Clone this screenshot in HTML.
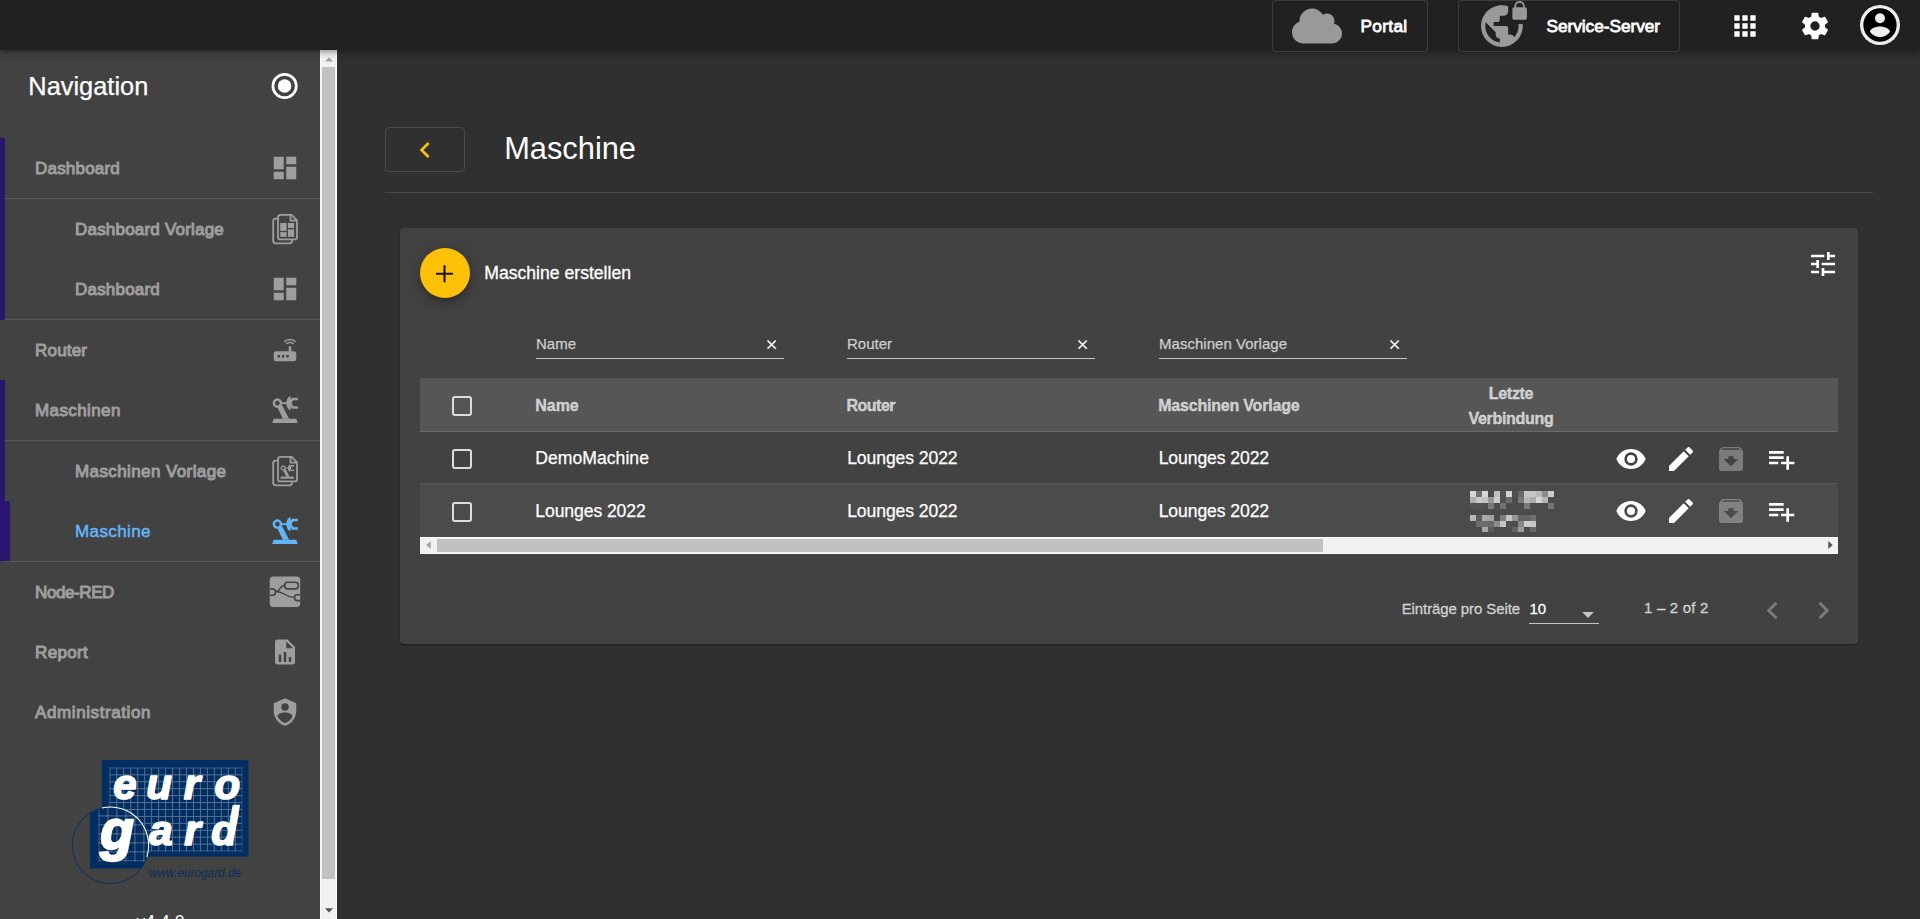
<!DOCTYPE html>
<html lang="de">
<head>
<meta charset="utf-8">
<title>Maschine</title>
<style>
*{box-sizing:border-box;margin:0;padding:0}
html,body{width:1920px;height:919px;overflow:hidden;background:#303030;font-family:"Liberation Sans",sans-serif;color:#fff}
.abs{position:absolute}
.t{position:absolute;white-space:nowrap;line-height:1}
.m{-webkit-text-stroke:1px currentColor}
.l{-webkit-text-stroke:.3px currentColor}
#topbar{position:absolute;left:0;top:0;width:1920px;height:50px;background:#212121;box-shadow:0 2px 4px -1px rgba(0,0,0,.2),0 4px 5px 0 rgba(0,0,0,.14),0 1px 10px 0 rgba(0,0,0,.12);z-index:10}
#side{position:absolute;left:0;top:50px;width:320px;height:869px;background:#424242;overflow:hidden;z-index:5}
#sbar{position:absolute;left:320px;top:50px;width:17px;height:869px;background:#f1f1f1;border-left:1px solid #fafafa;border-right:1px solid #fafafa;z-index:6}
#sbar .thumb{position:absolute;left:1px;top:17px;width:13px;height:812px;background:#c1c1c1}
.tbtn{position:absolute;top:0;height:52px;background:#212121;border:1px solid rgba(255,255,255,.12);border-radius:4px}
.nav{position:absolute;left:0;width:320px;height:60px}
.nav .t{top:21.7px;font-size:17px;color:#9e9e9e;letter-spacing:.2px}
.nav svg{position:absolute;left:270px;top:15px;width:30px;height:30px;fill:#9e9e9e}
.sep{position:absolute;left:5px;width:315px;height:1px;background:rgba(255,255,255,.12)}
.strip{position:absolute;left:0;background:#2a1570}
#card{position:absolute;left:400px;top:228px;width:1458px;height:416px;background:#424242;border-radius:4px;box-shadow:0 2px 1px -1px rgba(0,0,0,.2),0 1px 1px 0 rgba(0,0,0,.14),0 1px 3px 0 rgba(0,0,0,.12)}
.flt{position:absolute;top:334px;height:25px;width:248px;border-bottom:1px solid rgba(255,255,255,.7)}
.flt .t{left:0;top:1.9px;font-size:15px;color:rgba(255,255,255,.7);-webkit-text-stroke:.25px currentColor}
.flt svg{position:absolute;left:228.300px;top:2.700px;width:15.300px;height:15.300px;fill:#fff;stroke:#fff;stroke-width:.7}
.th{font-size:16px;font-weight:bold;color:rgba(255,255,255,.7);-webkit-text-stroke:.35px currentColor}
.td{font-size:17.6px;color:#fff;letter-spacing:-.1px;-webkit-text-stroke:.25px #fff}
.cb{position:absolute;left:452px;width:20px;height:20px;border:2.2px solid #dcdcdc;border-radius:3px}
.ic{position:absolute;width:32px;height:32px;fill:#fff}
.dis{fill:rgba(255,255,255,.3)}
</style>
</head>
<body>

<!-- TOP BAR -->
<div id="topbar">
  <div class="tbtn" style="left:1272px;width:156px">
    <svg class="abs" style="left:19px;top:4.5px;width:50px;height:40px" viewBox="0 0 640 512"><path fill="#999" d="M537.6 226.6c4.1-10.7 6.4-22.4 6.4-34.600 0-53-43-96-96-96-19.700 0-38.100 6-53.300 16.200C367 64.200 315.300 32 256 32c-88.400 0-160 71.600-160 160 0 2.700.1 5.400.2 8.100C40.200 219.800 0 273.200 0 336c0 79.500 64.500 144 144 144h368c70.700 0 128-57.300 128-128 0-61.900-44-113.600-102.400-125.400z"/></svg>
    <span class="t" style="left:87.5px;top:16.5px;font-size:17.3px;letter-spacing:.3px;-webkit-text-stroke:.8px #fff">Portal</span>
  </div>
  <div class="tbtn" style="left:1458px;width:222px">
    <svg class="abs" style="left:19.5px;top:-2px;width:50px;height:50px" viewBox="0 0 24 24"><path fill="#999" d="M22,4V3.500C22,2.120 20.880,1 19.500,1C18.120,1 17,2.120 17,3.500V4C16.450,4 16,4.450 16,5V9C16,9.550 16.450,10 17,10H22C22.550,10 23,9.550 23,9V5C23,4.450 22.550,4 22,4M21.200,4H17.800V3.500C17.800,2.560 18.560,1.800 19.500,1.800C20.440,1.800 21.200,2.560 21.200,3.500V4M18.920,12C18.960,12.330 19,12.660 19,13C19,15.080 18.200,16.970 16.900,18.390C16.640,17.580 15.900,17 15,17H14V14C14,13.450 13.550,13 13,13H7V11H9C9.550,11 10,10.550 10,10V8H12C13.100,8 14,7.100 14,6V3.460C13.050,3.160 12.050,3 11,3C5.480,3 1,7.480 1,13C1,18.520 5.480,23 11,23C16.520,23 21,18.520 21,13C21,12.660 20.980,12.330 20.950,12H18.920M10,20.930C6.050,20.440 3,17.080 3,13C3,12.380 3.080,11.790 3.210,11.210L8,16V17C8,18.100 8.900,19 10,19V20.930Z"/></svg>
    <span class="t" style="left:87.5px;top:16.5px;font-size:17.3px;letter-spacing:-.05px;-webkit-text-stroke:.8px #fff">Service-Server</span>
  </div>
  <svg class="abs" style="left:1729px;top:10px;width:32px;height:32px" viewBox="0 0 24 24"><path fill="#fff" d="M16,20H20V16H16M16,14H20V10H16M10,8H14V4H10M16,8H20V4H16M10,14H14V10H10M4,14H8V10H4M4,20H8V16H4M10,20H14V16H10M4,8H8V4H4V8Z"/></svg>
  <svg class="abs" style="left:1799px;top:10px;width:32px;height:32px" viewBox="0 0 24 24"><path fill="#fff" d="M12,15.500A3.500,3.500 0 0,1 8.500,12A3.500,3.500 0 0,1 12,8.500A3.500,3.500 0 0,1 15.500,12A3.500,3.500 0 0,1 12,15.500M19.430,12.970C19.470,12.650 19.500,12.330 19.500,12C19.500,11.670 19.470,11.340 19.430,11L21.540,9.370C21.730,9.220 21.780,8.950 21.660,8.730L19.660,5.270C19.540,5.050 19.270,4.960 19.050,5.050L16.560,6.050C16.040,5.660 15.500,5.320 14.870,5.070L14.500,2.420C14.460,2.180 14.250,2 14,2H10C9.750,2 9.540,2.180 9.500,2.420L9.130,5.070C8.500,5.320 7.960,5.660 7.440,6.050L4.950,5.050C4.730,4.960 4.460,5.050 4.340,5.270L2.340,8.730C2.210,8.950 2.270,9.220 2.460,9.370L4.570,11C4.530,11.340 4.500,11.670 4.500,12C4.500,12.330 4.530,12.650 4.570,12.970L2.460,14.630C2.270,14.780 2.210,15.050 2.340,15.270L4.340,18.730C4.460,18.950 4.730,19.030 4.950,18.950L7.440,17.940C7.960,18.340 8.500,18.680 9.130,18.930L9.500,21.580C9.540,21.820 9.750,22 10,22H14C14.250,22 14.460,21.820 14.500,21.580L14.870,18.930C15.500,18.670 16.040,18.340 16.560,17.940L19.050,18.950C19.270,19.030 19.540,18.950 19.660,18.730L21.660,15.270C21.780,15.050 21.730,14.780 21.540,14.630L19.430,12.970Z"/></svg>
  <div class="abs" style="left:1860px;top:5px;width:40px;height:40px;border-radius:50%;background:#eee"></div>
  <svg class="abs" style="left:1860px;top:5px;width:40px;height:40px" viewBox="0 0 24 24"><path fill="#000" d="M12,19.200C9.500,19.200 7.290,17.920 6,16C6.030,14 10,12.900 12,12.900C14,12.900 17.970,14 18,16C16.710,17.920 14.500,19.200 12,19.200M12,5A3,3 0 0,1 15,8A3,3 0 0,1 12,11A3,3 0 0,1 9,8A3,3 0 0,1 12,5M12,2A10,10 0 0,0 2,12A10,10 0 0,0 12,22A10,10 0 0,0 22,12C22,6.470 17.500,2 12,2Z"/></svg>
</div>

<!-- SIDEBAR -->
<svg width="0" height="0" style="position:absolute">
  <defs>
    <symbol id="i-dash" viewBox="0 0 24 24"><path d="M13,3V9H21V3M13,21H21V11H13M3,21H11V15H3M3,13H11V3H3V13Z"/></symbol>
    <symbol id="i-robot" viewBox="0 0 40 48">
      <path fill-rule="evenodd" d="M12.400,8.300a4.750,4.750 0 1 0 0.001,0ZM12.400,10.700a2.350,2.350 0 1 1 -0.001,0Z"/>
      <path d="M12.300,17.300L17.900,28.700H24.100L17.000,14.900Z"/>
      <path d="M8.600,28.700H31.300L32.700,32.900H7.200Z"/>
      <rect x="16.500" y="12.200" width="5.500" height="1.800"/>
      <path d="M25.300,5.900C20,7.500 20,18.600 25.300,20.200C26.300,16 26.300,10 25.300,5.900Z"/>
      <path d="M25,13.050L27.700,8.900H32.900M25,13.050L27.700,17.400H32.900" fill="none" stroke="currentColor" stroke-width="2.500"/>
    </symbol>
    <symbol id="i-files" viewBox="0 0 40 48">
      <path fill="none" stroke="currentColor" stroke-width="1.800" d="M15.500,9.900H26.600L32,15.300V31.900a2.500,2.500 0 0 1 -2.500,2.500H15.500a2.500,2.500 0 0 1 -2.500,-2.500V12.400a2.500,2.500 0 0 1 2.500,-2.500ZM25.500,10.200V15.700H31.700M13,13.700H10.700a2.500,2.500 0 0 0 -2.500,2.500V35.800a2.500,2.500 0 0 0 2.500,2.500H24.500a2.500,2.500 0 0 0 2.500,-2.500V34.600"/>
    </symbol>
  </defs>
</svg>
<div id="side">
  <div class="t" style="left:28.300px;top:23.500px;font-size:25.400px;color:#fff;-webkit-text-stroke:.25px #fff">Navigation</div>
  <svg class="abs" style="left:264px;top:15px;width:42px;height:42px" viewBox="0 0 42 42"><circle cx="20.600" cy="21" r="11.700" fill="none" stroke="#fff" stroke-width="2.700"/><circle cx="20.600" cy="21" r="6.800" fill="#fff"/></svg>

  <div class="strip" style="top:88px;width:5px;height:182px"></div>
  <div class="strip" style="top:330px;width:5px;height:181px"></div>
  <div class="strip" style="top:451px;width:10px;height:60px"></div>

  <div class="nav" style="top:88px"><span class="t m" style="left:35px">Dashboard</span><svg><use href="#i-dash"/></svg></div>
  <div class="sep" style="top:148px"></div>
  <div class="nav" style="top:149px"><span class="t m" style="left:75px">Dashboard Vorlage</span>
    <svg style="left:265px;top:6px;width:40px;height:48px;color:#9e9e9e" viewBox="0 0 40 48"><use href="#i-files"/><rect x="15.250" y="18" width="6.400" height="7.850"/><rect x="23" y="18" width="6.150" height="5"/><rect x="15.250" y="27.150" width="6.400" height="4.700"/><rect x="23" y="24.300" width="6.150" height="7.550"/></svg></div>
  <div class="nav" style="top:209px"><span class="t m" style="left:75px">Dashboard</span><svg><use href="#i-dash"/></svg></div>
  <div class="sep" style="top:269px"></div>
  <div class="nav" style="top:270px"><span class="t m" style="left:35px">Router</span>
    <svg viewBox="0 0 24 24"><path d="M20.200,5.900L21,5.100C19.600,3.700 17.800,3 16,3C14.200,3 12.400,3.700 11,5.100L11.800,5.900C13,4.800 14.500,4.200 16,4.200C17.500,4.200 19,4.800 20.200,5.900M19.300,6.700C18.400,5.800 17.200,5.300 16,5.300C14.800,5.300 13.600,5.800 12.700,6.700L13.500,7.500C14.200,6.800 15.100,6.500 16,6.500C16.900,6.500 17.800,6.800 18.500,7.500L19.300,6.700M19,13H17V9H15V13H5A2,2 0 0,0 3,15V19A2,2 0 0,0 5,21H19A2,2 0 0,0 21,19V15A2,2 0 0,0 19,13M8,18H6V16H8V18M11.500,18H9.500V16H11.500V18M15,18H13V16H15V18Z"/></svg></div>
  <div class="nav" style="top:330px"><span class="t m" style="left:35px;letter-spacing:0.40px">Maschinen</span>
    <svg style="left:265px;top:10px;width:40px;height:48px;color:#9e9e9e"><use href="#i-robot"/></svg></div>
  <div class="sep" style="top:390px"></div>
  <div class="nav" style="top:391px"><span class="t m" style="left:75px;letter-spacing:0.40px">Maschinen Vorlage</span>
    <svg style="left:265px;top:6px;width:40px;height:48px;color:#9e9e9e" viewBox="0 0 40 48"><use href="#i-files"/><g transform="translate(11.460 13.960) scale(.54)"><use href="#i-robot" width="40" height="48"/></g></svg></div>
  <div class="nav" style="top:451px"><span class="t" style="left:75px;color:#64b5f6;letter-spacing:0.4px;-webkit-text-stroke:.5px #64b5f6">Maschine</span>
    <svg style="left:265px;top:10px;width:40px;height:48px;color:#64b5f6;fill:#64b5f6"><use href="#i-robot"/></svg></div>
  <div class="sep" style="top:511px"></div>
  <div class="nav" style="top:512px"><span class="t m" style="left:35px;letter-spacing:-0.40px">Node-RED</span>
    <svg style="left:265px;top:6px;width:40px;height:48px" viewBox="0 0 40 48"><rect x="4.700" y="8.600" width="30.500" height="30.500" rx="3.600"/><g fill="none" stroke="#424242" stroke-width="1.600"><rect x="19.700" y="14.200" width="13.600" height="6.700" rx="2.800"/><path d="M4.700,21H7.800a2.600,2.600 0 0 1 2.600,2.600v1a2.600,2.600 0 0 1 -2.600,2.600H4.700"/><path d="M35.200,26.700H32.200a2.600,2.600 0 0 0 -2.600,2.600v0.700a2.600,2.600 0 0 0 2.600,2.600H35.200"/><path d="M10.700,23.500C16,23.500 14,17.500 19.700,17.500M10.700,23.500C20,23.500 20,29.600 29.600,29.600" stroke-width="1.300"/></g></svg></div>
  <div class="nav" style="top:572px"><span class="t m" style="left:35px;letter-spacing:0.35px">Report</span>
    <svg viewBox="0 0 24 24"><path d="M13,9H18.500L13,3.500V9M6,2H14L20,8V20A2,2 0 0,1 18,22H6C4.890,22 4,21.100 4,20V4C4,2.890 4.890,2 6,2M7,20H9V14H7V20M11,20H13V12H11V20M15,20H17V16H15V20Z"/></svg></div>
  <div class="nav" style="top:632px"><span class="t m" style="left:35px;letter-spacing:0.60px">Administration</span>
    <svg viewBox="0 0 24 24"><path d="M12,1L3,5V11C3,16.550 6.840,21.740 12,23C17.160,21.740 21,16.550 21,11V5L12,1M12,5A3,3 0 0,1 15,8A3,3 0 0,1 12,11A3,3 0 0,1 9,8A3,3 0 0,1 12,5M17.130,17C15.920,18.850 14.110,20.240 12,20.920C9.890,20.240 8.080,18.850 6.870,17C6.530,16.500 6.240,16 6,15.470C6,13.820 8.710,12.470 12,12.470C15.290,12.470 18,13.790 18,15.470C17.760,16 17.470,16.500 17.130,17Z"/></svg></div>

  <!-- LOGO (coordinates are page px; svg placed at page origin of sidebar: top=50) -->
  <svg class="abs" style="left:60px;top:700px;width:200px;height:169px" viewBox="60 750 200 169">
    <defs>
      <clipPath id="lens"><circle cx="110.500" cy="845.300" r="38.300"/></clipPath>
      <pattern id="grid" x="109.300" y="767.400" width="6.970" height="6.930" patternUnits="userSpaceOnUse"><path d="M0,.5H7M.5,0V7" stroke="rgba(205,205,205,.42)" stroke-width="1" fill="none"/></pattern>
      <pattern id="gridL" x="98.400" y="815.400" width="9" height="9" patternUnits="userSpaceOnUse"><path d="M0,.5H9M.5,0V9" stroke="rgba(205,205,205,.4)" stroke-width="1" fill="none"/></pattern>
    </defs>
    <rect x="101.900" y="760.100" width="146.500" height="96.500" fill="#002d62"/>
    <rect x="109.300" y="767.400" width="133" height="84.100" fill="url(#grid)"/>
    <g clip-path="url(#lens)">
      <rect x="90" y="800" width="62" height="68.400" fill="#002d62"/>
      <rect x="98.400" y="800" width="54" height="61.400" fill="url(#gridL)"/>
    </g>
    <circle cx="110.500" cy="845.300" r="38.300" fill="none" stroke="#0a2d62" stroke-width="1"/>
    <path d="M101.900,808 A38.300,38.300 0 0 1 146.800,857" fill="none" stroke="#fff" stroke-width="1.100"/>
    <g font-family="Liberation Sans, sans-serif" font-weight="bold" font-style="italic" fill="#fff" stroke="#fff" stroke-width="1.700" stroke-linejoin="round">
      <text x="113.300 146.150 183.800 214.500" y="799.400" font-size="42">euro</text>
      <text><tspan x="100.300" y="848.800" font-size="55" stroke-width="2.400">g</tspan><tspan x="149.200 184.150 211.300" y="844.700" font-size="42">ard</tspan></text>
      <path d="M231.300,817L237,817L239.100,805.600L233.400,805.600Z" stroke-width="1.700"/>
    </g>
    <text x="149" y="876.700" font-family="Liberation Sans, sans-serif" font-style="italic" font-size="11.850" letter-spacing="0" fill="#0d2c5c">www.eurogard.de</text>
  </svg>
  <div class="t" style="left:136.500px;top:863.400px;font-size:17.600px;color:#fff;transform:translateY(.6px)">v4.4.0</div>
</div>
<div id="sbar"><div class="thumb"></div>
  <svg class="abs" style="left:4px;top:6.500px;width:8px;height:5px" viewBox="0 0 8 5"><path d="M0,4.500L4,.3L8,4.500Z" fill="#a3a3a3"/></svg>
  <svg class="abs" style="left:4px;top:857.500px;width:8px;height:5px" viewBox="0 0 8 5"><path d="M0,.3L4,4.500L8,.3Z" fill="#505050"/></svg>
</div>

<!-- PAGE HEADER -->
<div class="abs" style="left:385px;top:127px;width:80px;height:45px;border:1px solid rgba(255,255,255,.12);border-radius:4px"></div>
<svg class="abs" style="left:409px;top:134px;width:32px;height:32px" viewBox="0 0 24 24"><path fill="#ffc107" d="M15.410,16.580L10.830,12L15.410,7.410L14,6L8,12L14,18L15.410,16.580Z"/></svg>
<div class="t" style="left:504.200px;top:133.600px;font-size:30.800px;color:#fff">Maschine</div>
<div class="abs" style="left:385px;top:192px;width:1488px;height:1px;background:rgba(255,255,255,.12)"></div>

<!-- CARD -->
<div id="card"></div>
<div class="abs" style="left:420px;top:248px;width:50px;height:50px;border-radius:50%;background:#ffc107;box-shadow:0 3px 5px -1px rgba(0,0,0,.2),0 6px 10px 0 rgba(0,0,0,.14),0 1px 18px 0 rgba(0,0,0,.12)"></div>
<svg class="abs" style="left:435px;top:264px;width:20px;height:20px" viewBox="0 0 20 20"><path d="M1,9.750H18M9.500,1.200V18.300" stroke="#1c1500" stroke-width="2.100" fill="none"/></svg>
<div class="t l" style="left:484.300px;top:265.100px;font-size:17.600px;color:#fff">Maschine erstellen</div>
<svg class="ic" style="left:1807px;top:247.750px" viewBox="0 0 24 24"><path d="M3,17V19H9V17H3M3,5V7H13V5H3M13,21V19H21V17H13V15H11V21H13M7,9V11H3V13H7V15H9V9H7M21,13V11H11V13H21M15,9H17V7H21V5H17V3H15V9Z"/></svg>

<!-- FILTERS -->
<svg width="0" height="0" style="position:absolute"><defs><symbol id="i-x" viewBox="0 0 24 24"><path d="M19,6.410L17.590,5L12,10.590L6.410,5L5,6.410L10.590,12L5,17.590L6.410,19L12,13.410L17.590,19L19,17.590L13.410,12L19,6.410Z"/></symbol></defs></svg>
<div class="flt" style="left:536px"><span class="t">Name</span><svg><use href="#i-x"/></svg></div>
<div class="flt" style="left:847px"><span class="t">Router</span><svg><use href="#i-x"/></svg></div>
<div class="flt" style="left:1159px"><span class="t" style="letter-spacing:.03px">Maschinen Vorlage</span><svg><use href="#i-x"/></svg></div>

<!-- TABLE -->
<div class="abs" style="left:420px;top:378px;width:1418px;height:54px;background:#565656;border-bottom:1px solid #6a6a6a"></div>
<div class="abs" style="left:420px;top:432px;width:1418px;height:52px;background:#424242;border-bottom:1px solid #585858"></div>
<div class="abs" style="left:420px;top:484px;width:1418px;height:53px;background:#4b4b4b"></div>
<div class="cb" style="top:396px"></div>
<div class="cb" style="top:449px"></div>
<div class="cb" style="top:502px"></div>
<div class="t th" style="left:535.200px;top:398.400px">Name</div>
<div class="t th" style="left:846.500px;top:398.400px;letter-spacing:-.5px">Router</div>
<div class="t th" style="left:1158.200px;top:398.400px;letter-spacing:-.2px">Maschinen Vorlage</div>
<div class="t th" style="left:1461px;top:385.700px;width:100px;text-align:center;letter-spacing:-.3px">Letzte</div>
<div class="t th" style="left:1461px;top:410.700px;width:100px;text-align:center;letter-spacing:-.3px">Verbindung</div>
<div class="t td" style="left:535.300px;top:450.200px;letter-spacing:.02px">DemoMachine</div>
<div class="t td" style="left:847.200px;top:450.200px">Lounges 2022</div>
<div class="t td" style="left:1158.700px;top:450.200px">Lounges 2022</div>
<div class="t td" style="left:535.300px;top:502.900px">Lounges 2022</div>
<div class="t td" style="left:847.200px;top:502.900px">Lounges 2022</div>
<div class="t td" style="left:1158.700px;top:502.900px">Lounges 2022</div>

<!-- ROW ACTIONS -->
<svg width="0" height="0" style="position:absolute"><defs>
<symbol id="i-eye" viewBox="0 0 24 24"><path d="M12,9A3,3 0 0,0 9,12A3,3 0 0,0 12,15A3,3 0 0,0 15,12A3,3 0 0,0 12,9M12,17A5,5 0 0,1 7,12A5,5 0 0,1 12,7A5,5 0 0,1 17,12A5,5 0 0,1 12,17M12,4.500C7,4.500 2.730,7.610 1,12C2.730,16.390 7,19.500 12,19.500C17,19.500 21.270,16.390 23,12C21.270,7.610 17,4.500 12,4.500Z"/></symbol>
<symbol id="i-pen" viewBox="0 0 24 24"><path d="M20.710,7.040C21.100,6.650 21.100,6 20.710,5.630L18.370,3.290C18,2.900 17.350,2.900 16.960,3.290L15.120,5.120L18.870,8.870M3,17.250V21H6.750L17.810,9.930L14.060,6.180L3,17.250Z"/></symbol>
<symbol id="i-arc" viewBox="0 0 24 24"><path d="M5.120,5L5.930,4H17.930L18.870,5M12,17.500L6.500,12H10V10H14V12H17.500L12,17.500M20.540,5.230L19.150,3.550C18.880,3.210 18.470,3 18,3H6C5.530,3 5.120,3.210 4.840,3.550L3.460,5.230C3.170,5.570 3,6 3,6.500V19A2,2 0 0,0 5,21H19A2,2 0 0,0 21,19V6.500C21,6 20.830,5.570 20.540,5.230Z"/></symbol>
<symbol id="i-pl" viewBox="0 0 24 24"><path d="M3 16H10V14H3M18 14V10H16V14H12V16H16V20H18V16H22V14M14 6H3V8H14M14 10H3V12H14V10Z"/></symbol>
</defs></svg>
<svg class="ic" style="left:1615px;top:443px"><use href="#i-eye"/></svg>
<svg class="ic" style="left:1665px;top:443px"><use href="#i-pen"/></svg>
<svg class="ic dis" style="left:1715px;top:443px"><use href="#i-arc"/></svg>
<svg class="ic" style="left:1764.500px;top:443px"><use href="#i-pl"/></svg>
<svg class="ic" style="left:1615px;top:495px"><use href="#i-eye"/></svg>
<svg class="ic" style="left:1665px;top:495px"><use href="#i-pen"/></svg>
<svg class="ic dis" style="left:1715px;top:495px"><use href="#i-arc"/></svg>
<svg class="ic" style="left:1764.500px;top:495px"><use href="#i-pl"/></svg>

<!-- BLURRED DATE (pixelated in source) -->
<svg class="abs" style="left:1470px;top:490px;width:84px;height:42px" viewBox="0 0 84 42" shape-rendering="crispEdges"><rect x="0" y="1" width="6" height="6" fill="#d6d6d6"/><rect x="6" y="1" width="6" height="6" fill="#707070"/><rect x="12" y="1" width="6" height="6" fill="#d8d8d8"/><rect x="24" y="1" width="6" height="6" fill="#c0c0c0"/><rect x="30" y="1" width="6" height="6" fill="#555555"/><rect x="36" y="1" width="6" height="6" fill="#d4d4d4"/><rect x="42" y="1" width="6" height="6" fill="#505050"/><rect x="48" y="1" width="6" height="6" fill="#686868"/><rect x="54" y="1" width="6" height="6" fill="#c6c6c6"/><rect x="60" y="1" width="6" height="6" fill="#c4c4c4"/><rect x="66" y="1" width="6" height="6" fill="#b8b8b8"/><rect x="72" y="1" width="6" height="6" fill="#8c8c8c"/><rect x="78" y="1" width="6" height="6" fill="#cccccc"/><rect x="0" y="7" width="6" height="6" fill="#b0b0b0"/><rect x="6" y="7" width="6" height="6" fill="#c8c8c8"/><rect x="12" y="7" width="6" height="6" fill="#c0c0c0"/><rect x="18" y="7" width="6" height="6" fill="#989898"/><rect x="24" y="7" width="6" height="6" fill="#cccccc"/><rect x="30" y="7" width="6" height="6" fill="#525252"/><rect x="36" y="7" width="6" height="6" fill="#6c6c6c"/><rect x="48" y="7" width="6" height="6" fill="#787878"/><rect x="54" y="7" width="6" height="6" fill="#b8b8b8"/><rect x="60" y="7" width="6" height="6" fill="#acacac"/><rect x="66" y="7" width="6" height="6" fill="#d4d4d4"/><rect x="72" y="7" width="6" height="6" fill="#b4b4b4"/><rect x="0" y="13" width="6" height="6" fill="#545454"/><rect x="6" y="13" width="6" height="6" fill="#525252"/><rect x="12" y="13" width="6" height="6" fill="#4e4e4e"/><rect x="18" y="13" width="6" height="6" fill="#787878"/><rect x="30" y="13" width="6" height="6" fill="#707070"/><rect x="54" y="13" width="6" height="6" fill="#787878"/><rect x="78" y="13" width="6" height="6" fill="#747474"/><rect x="0" y="25" width="6" height="6" fill="#b8b8b8"/><rect x="6" y="25" width="6" height="6" fill="#5a5a5a"/><rect x="12" y="25" width="6" height="6" fill="#a8a8a8"/><rect x="18" y="25" width="6" height="6" fill="#a4a4a4"/><rect x="30" y="25" width="6" height="6" fill="#7c7c7c"/><rect x="36" y="25" width="6" height="6" fill="#c4c4c4"/><rect x="42" y="25" width="6" height="6" fill="#949494"/><rect x="48" y="25" width="6" height="6" fill="#646464"/><rect x="54" y="25" width="6" height="6" fill="#646464"/><rect x="60" y="25" width="6" height="6" fill="#707070"/><rect x="6" y="31" width="6" height="6" fill="#6c6c6c"/><rect x="12" y="31" width="6" height="6" fill="#6c6c6c"/><rect x="18" y="31" width="6" height="6" fill="#686868"/><rect x="24" y="31" width="6" height="6" fill="#8c8c8c"/><rect x="30" y="31" width="6" height="6" fill="#c4c4c4"/><rect x="36" y="31" width="6" height="6" fill="#505050"/><rect x="48" y="31" width="6" height="6" fill="#888888"/><rect x="54" y="31" width="6" height="6" fill="#cccccc"/><rect x="60" y="31" width="6" height="6" fill="#c4c4c4"/><rect x="12" y="37" width="6" height="5" fill="#a8a8a8"/><rect x="18" y="37" width="6" height="5" fill="#5c5c5c"/><rect x="42" y="37" width="6" height="5" fill="#646464"/><rect x="48" y="37" width="6" height="5" fill="#9c9c9c"/><rect x="60" y="37" width="6" height="5" fill="#686868"/></svg>

<!-- H SCROLLBAR -->
<div class="abs" style="left:420px;top:537px;width:1418px;height:17px;background:#f1f1f1;border-top:1px solid #fafafa;border-bottom:1px solid #fafafa"></div>
<div class="abs" style="left:437px;top:539px;width:886px;height:13px;background:#c1c1c1"></div>
<svg class="abs" style="left:425.500px;top:541px;width:5px;height:8px" viewBox="0 0 5 8"><path d="M4.700,0L.3,4L4.700,8Z" fill="#a3a3a3"/></svg>
<svg class="abs" style="left:1828px;top:541px;width:5px;height:8px" viewBox="0 0 5 8"><path d="M.3,0L4.700,4L.3,8Z" fill="#505050"/></svg>

<!-- PAGINATION -->
<div class="t l" style="left:1401.700px;top:601.300px;font-size:15px;color:rgba(255,255,255,.7);letter-spacing:-.1px">Einträge pro Seite</div>
<div class="t l" style="left:1529.500px;top:601.300px;font-size:15px;color:#fff">10</div>
<div class="abs" style="left:1529px;top:622.500px;width:70px;height:1px;background:rgba(255,255,255,.7)"></div>
<svg class="abs" style="left:1582px;top:611.800px;width:12px;height:6px" viewBox="0 0 12 6"><path d="M.2,0H11.800L6,6Z" fill="rgba(255,255,255,.7)"/></svg>
<div class="t l" style="left:1644px;top:600.300px;font-size:15px;color:rgba(255,255,255,.7);letter-spacing:.2px">1 – 2 of 2</div>
<svg class="abs" style="left:1755.200px;top:593px;width:35px;height:35px" viewBox="0 0 24 24"><path fill="rgba(255,255,255,.3)" d="M15.410,16.580L10.830,12L15.410,7.410L14,6L8,12L14,18L15.410,16.580Z"/></svg>
<svg class="abs" style="left:1806.200px;top:593px;width:35px;height:35px" viewBox="0 0 24 24"><path fill="rgba(255,255,255,.3)" d="M8.590,16.580L13.170,12L8.590,7.410L10,6L16,12L10,18L8.590,16.580Z"/></svg>
</body>
</html>
